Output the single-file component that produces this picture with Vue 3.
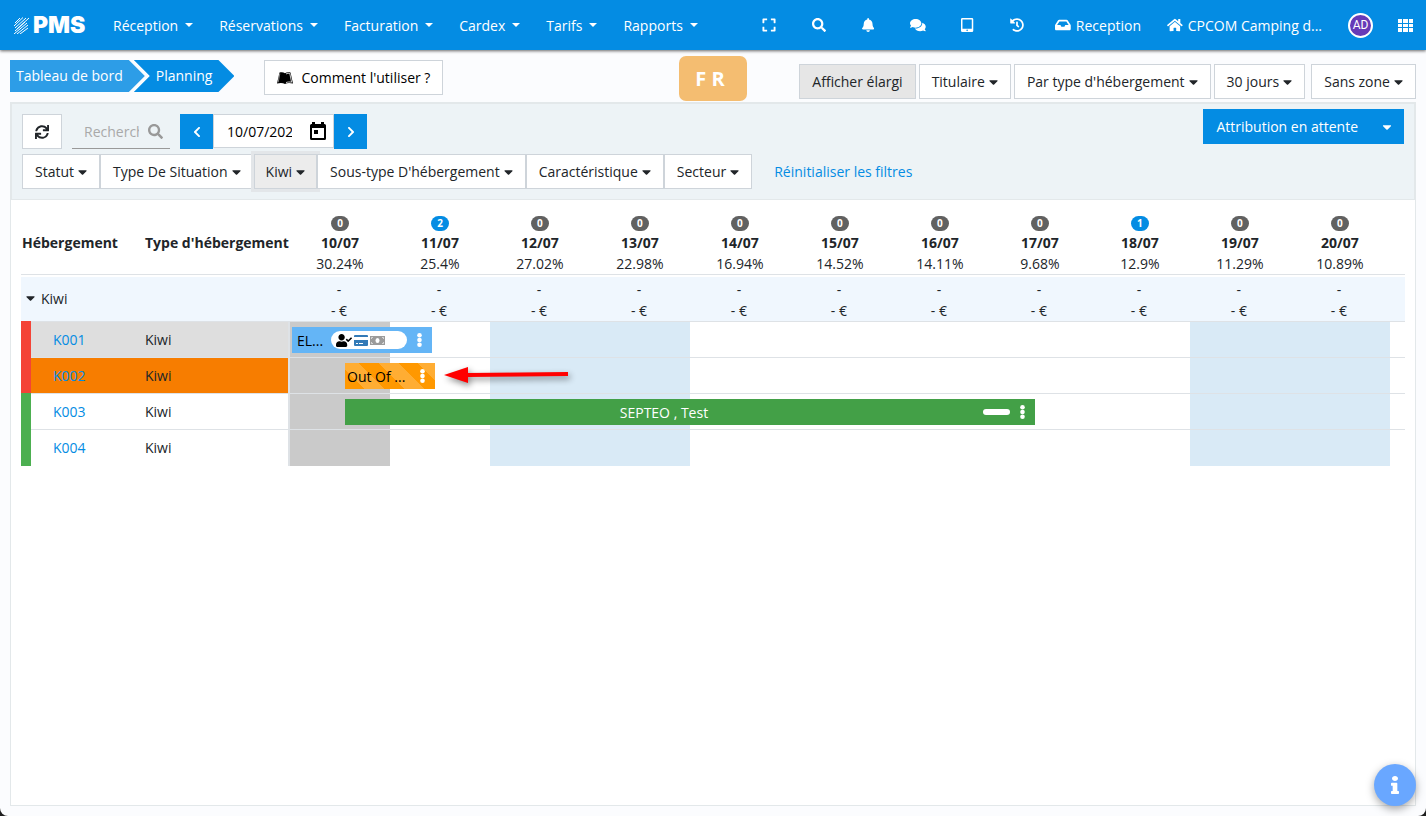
<template>
  <div class="page">
    <header class="navbar">
      <a href="#" class="logo" aria-label="PMS">
        <svg width="15" height="17" viewBox="0 0 15 17">
          <path d="M1 6L6 1M0 9L9 0.500M1 11L12 1M3 12L15 1M1 14L11 5M0 17L13 6M3 17L14 8M6 17L14 11" stroke="#fff" stroke-width="1" fill="none" />
        </svg>
        <span>PMS</span>
      </a>
      <nav class="menu">
        <button v-for="item in menu" :key="item" class="menu-item">{{ item }}<i class="tri"></i></button>
      </nav>
      <div class="nav-right">
        <div class="nav-icons">
          <button v-for="name in navIcons" :key="name" class="nav-icon" :aria-label="name">
            <svg height="14" :viewBox="icons[name].box"><path :d="icons[name].d" fill="currentColor" fill-rule="evenodd" /></svg>
          </button>
        </div>
        <a href="#" class="nav-link">
          <svg height="14" :viewBox="icons.inbox.box"><path :d="icons.inbox.d" fill="currentColor" fill-rule="evenodd" /></svg>
          Reception
        </a>
        <a href="#" class="nav-link">
          <svg height="14" :viewBox="icons.home.box"><path :d="icons.home.d" fill="currentColor" /></svg>
          CPCOM Camping d...
        </a>
        <button class="avatar">AD</button>
        <button class="apps" aria-label="Applications">
          <svg width="15" height="13" viewBox="0 0 15 13">
            <path d="M0 0h4v4H0zM5 0h5v4H5zM11 0h4v4h-4zM0 5h4v3H0zM5 5h5v3H5zM11 5h4v3h-4zM0 9h4v4H0zM5 9h5v4H5zM11 9h4v4h-4z" fill="#fff" />
          </svg>
        </button>
      </div>
    </header>

    <div class="subbar">
      <nav class="breadcrumb">
        <a href="#" class="crumb crumb-first">Tableau de bord</a>
        <a href="#" class="crumb crumb-last">Planning</a>
      </nav>
      <button class="btn help">
        <svg width="16" height="12" viewBox="0 0 16 12">
          <path d="M2.500 0.500C4.500 0 6.500 0 8 1.200C9.500 0 11.500 0 13.500 0.500L16 11.500C13 10.700 10 10.700 8 12C6 10.700 3 10.700 0 11.500z" fill="#000" />
          <path d="M9 2C10.300 1.200 11.700 1.200 12.800 1.500L14.600 10.200C12.600 9.800 10.700 9.900 9 10.600" fill="none" stroke="#fff" stroke-width="0.800" />
          <path d="M2.800 1.600L1.200 10.300" stroke="#fff" stroke-width="0.500" />
        </svg>
        Comment l'utiliser ?
      </button>
      <div class="lang">F R</div>
      <div class="view-buttons">
        <button class="btn pressed">Afficher élargi</button>
        <button v-for="label in views" :key="label" class="btn">
          {{ label }}
          <svg class="caret" width="9" height="14" :viewBox="icons.caret.box"><path :d="icons.caret.d" fill="currentColor" /></svg>
        </button>
      </div>
    </div>

    <main class="panel">
      <section class="filters">
        <div class="tools">
          <button class="btn refresh" aria-label="Actualiser">
            <svg width="14" height="14" :viewBox="icons.sync.box"><path :d="icons.sync.d" fill="currentColor" /></svg>
          </button>
          <div class="search">
            <input v-model="search" type="text" placeholder="Rechercher" aria-label="Rechercher" />
            <svg width="15" height="15" :viewBox="icons.search.box"><path :d="icons.search.d" fill="currentColor" /></svg>
          </div>
          <div class="date">
            <button class="step" aria-label="Jour précédent">
              <svg width="8" height="12" :viewBox="icons.left.box"><path :d="icons.left.d" fill="#fff" /></svg>
            </button>
            <div class="date-field">
              <input v-model="date" type="text" aria-label="Date" />
              <svg width="16" height="18" viewBox="0 0 16 18">
                <path d="M2 2V0h3v2h6V0h3v2h0.500A1.500 1.500 0 0 1 16 3.500v13A1.500 1.500 0 0 1 14.500 18h-13A1.500 1.500 0 0 1 0 16.500v-13A1.500 1.500 0 0 1 1.500 2zM2 6v10h12V6zM4 8h4v4H4z" fill="#000" fill-rule="evenodd" />
              </svg>
            </div>
            <button class="step" aria-label="Jour suivant">
              <svg width="8" height="12" :viewBox="icons.right.box"><path :d="icons.right.d" fill="#fff" /></svg>
            </button>
          </div>
          <button class="pending">Attribution en attente
            <svg class="caret" width="10" height="14" :viewBox="icons.caret.box"><path :d="icons.caret.d" fill="currentColor" /></svg>
          </button>
        </div>
        <div class="filter-row">
          <button v-for="f in filters" :key="f" class="btn" :class="{ active: f === 'Kiwi' }">
            {{ f }}
            <svg class="caret" width="9" height="14" :viewBox="icons.caret.box"><path :d="icons.caret.d" fill="currentColor" /></svg>
          </button>
          <a href="#" class="reset">Réinitialiser les filtres</a>
        </div>
      </section>

      <table class="planning">
        <colgroup>
          <col class="c-strip" />
          <col class="c-name" />
          <col class="c-type" />
          <col v-for="d in days" :key="d.date" />
          <col class="c-end" />
        </colgroup>
        <thead>
          <tr>
            <th colspan="2" class="head-name">Hébergement</th>
            <th class="head-type">Type d'hébergement</th>
            <th v-for="d in days" :key="d.date" class="head-day">
              <span class="count" :class="{ some: d.count > 0 }">{{ d.count }}</span>
              <div>{{ d.date }}</div>
              <div class="rate">{{ d.rate }}%</div>
            </th>
            <th></th>
          </tr>
        </thead>
        <tbody>
          <tr class="group">
            <td colspan="3" class="group-name">
              <button class="toggle">
                <svg width="9" height="14" :viewBox="icons.caret.box"><path :d="icons.caret.d" fill="currentColor" /></svg>
                Kiwi
              </button>
            </td>
            <td v-for="d in days" :key="d.date" class="sum"><div>-</div><div>- €</div></td>
            <td></td>
          </tr>
          <tr v-for="room in rooms" :key="room.name" class="room" :class="room.tint">
            <td class="strip" :class="room.state"></td>
            <td class="name"><a href="#">{{ room.name }}</a></td>
            <td class="type">Kiwi</td>
            <td v-for="(d, i) in days" :key="d.date" class="day" :class="{ today: i === 0, weekend: d.weekend }">
              <template v-if="i === 0 && room.bar">
                <div class="bar" :class="room.bar.kind" :style="{ left: room.bar.left + '%', width: room.bar.width + '%' }">
                  <span class="bar-text">{{ room.bar.text }}</span>
                  <span v-if="room.bar.kind === 'stay'" class="pill">
                    <svg width="16" height="13" :viewBox="icons.userCheck.box"><path :d="icons.userCheck.d" fill="#000" /></svg>
                    <svg width="14" height="11" viewBox="0 0 14 11">
                      <path d="M1 0h12a1 1 0 0 1 1 1v1H0V1a1 1 0 0 1 1-1zM0 5h14v5a1 1 0 0 1-1 1H1a1 1 0 0 1-1-1z" fill="#337ab7" />
                      <path d="M2 8.500h2M5 8.500h4" stroke="#fff" />
                    </svg>
                    <svg width="15" height="9" viewBox="0 0 15 9">
                      <path d="M0 0h15v9H0z" fill="#9b9b9b" />
                      <ellipse cx="7.500" cy="4.500" rx="2" ry="2.500" fill="#fff" />
                      <path d="M1.500 3V1.500H3M12 1.500h1.500V3M13.500 6v1.500H12M3 7.500H1.500V6" stroke="#fff" stroke-width="0.600" fill="none" />
                    </svg>
                  </span>
                  <span v-if="room.bar.kind === 'booking'" class="dash"></span>
                  <button class="dots" aria-label="Options">
                    <svg width="5" height="14" viewBox="0 0 5 14">
                      <circle cx="2.500" cy="2.300" r="2.300" fill="#fff" />
                      <circle cx="2.500" cy="7" r="2.300" fill="#fff" />
                      <circle cx="2.500" cy="11.700" r="2.300" fill="#fff" />
                    </svg>
                  </button>
                </div>
                <svg v-if="room.bar.kind === 'blocked'" class="arrow" width="126" height="18" viewBox="0 0 126 18">
                  <path d="M0 9L24 1V7L124 6V10L24 11V17z" fill="#f00" />
                </svg>
              </template>
            </td>
            <td class="end"></td>
          </tr>
        </tbody>
      </table>
    </main>

    <button class="info" aria-label="Informations">
      <svg width="8" height="18" :viewBox="icons.info.box" preserveAspectRatio="none"><path :d="icons.info.d" fill="#fff" /></svg>
    </button>
  </div>
</template>

<script setup>
import { ref } from 'vue'

const search = ref('')
const date = ref('10/07/2025')

const menu = ['Réception', 'Réservations', 'Facturation', 'Cardex', 'Tarifs', 'Rapports']
const navIcons = ['expand', 'search', 'bell', 'comments', 'tablet', 'history']
const views = ['Titulaire', "Par type d'hébergement", '30 jours', 'Sans zone']
const filters = ['Statut', 'Type De Situation', 'Kiwi', "Sous-type D'hébergement", 'Caractéristique', 'Secteur']

const days = [
  { date: '10/07', count: 0, rate: '30.24' },
  { date: '11/07', count: 2, rate: '25.4' },
  { date: '12/07', count: 0, rate: '27.02', weekend: true },
  { date: '13/07', count: 0, rate: '22.98', weekend: true },
  { date: '14/07', count: 0, rate: '16.94' },
  { date: '15/07', count: 0, rate: '14.52' },
  { date: '16/07', count: 0, rate: '14.11' },
  { date: '17/07', count: 0, rate: '9.68' },
  { date: '18/07', count: 1, rate: '12.9' },
  { date: '19/07', count: 0, rate: '11.29', weekend: true },
  { date: '20/07', count: 0, rate: '10.89', weekend: true }
]

// left and width are in percent of one day
const rooms = [
  { name: 'K001', state: 'dirty', tint: 'grey', bar: { kind: 'stay', text: 'EL...', left: 2, width: 140 } },
  { name: 'K002', state: 'dirty', tint: 'orange', bar: { kind: 'blocked', text: 'Out Of ...', left: 55, width: 90 } },
  { name: 'K003', state: 'clean', bar: { kind: 'booking', text: 'SEPTEO , Test', left: 55, width: 690 } },
  { name: 'K004', state: 'clean' }
]

const icons = {
  expand: { box: '-16 16 480 480', d: 'M0 180V56c0-13.3 10.7-24 24-24h124c6.600 0 12 5.400 12 12v40c0 6.600-5.400 12-12 12H64v84c0 6.600-5.400 12-12 12H12c-6.600 0-12-5.400-12-12zM288 44v40c0 6.600 5.400 12 12 12h84v84c0 6.600 5.400 12 12 12h40c6.600 0 12-5.400 12-12V56c0-13.3-10.7-24-24-24H300c-6.600 0-12 5.400-12 12zm148 276h-40c-6.600 0-12 5.400-12 12v84h-84c-6.600 0-12 5.400-12 12v40c0 6.600 5.400 12 12 12h124c13.3 0 24-10.7 24-24V332c0-6.600-5.400-12-12-12zM160 468v-40c0-6.600-5.400-12-12-12H64v-84c0-6.600-5.400-12-12-12H12c-6.600 0-12 5.400-12 12v124c0 13.3 10.7 24 24 24h124c6.600 0 12-5.400 12-12z' },
  search: { box: '0 0 512 512', d: 'M505 442.7L405.3 343c-4.500-4.500-10.6-7-17-7H372c27.6-35.3 44-79.7 44-128C416 93.1 322.9 0 208 0S0 93.1 0 208s93.1 208 208 208c48.3 0 92.7-16.4 128-44v16.3c0 6.400 2.500 12.5 7 17l99.7 99.7c9.400 9.400 24.6 9.400 33.9 0l28.3-28.3c9.400-9.400 9.400-24.6.1-34zM208 336c-70.7 0-128-57.2-128-128 0-70.7 57.2-128 128-128 70.7 0 128 57.2 128 128 0 70.7-57.2 128-128 128z' },
  bell: { box: '0 0 448 512', d: 'M224 512c35.32 0 63.97-28.65 63.97-64H160.03c0 35.35 28.65 64 63.97 64zm215.39-149.71c-19.32-20.76-55.47-51.99-55.47-154.29 0-77.7-54.48-139.9-127.94-155.16V32c0-17.67-14.32-32-31.98-32s-31.98 14.33-31.98 32v20.84C118.56 68.1 64.08 130.3 64.08 208c0 102.3-36.15 133.53-55.47 154.29-6 6.45-8.66 14.16-8.61 21.71.11 16.4 12.98 32 32.1 32h383.8c19.12 0 32-15.6 32.1-32 .05-7.55-2.61-15.27-8.61-21.71z' },
  comments: { box: '0 0 576 512', d: 'M416 192c0-88.4-93.1-160-208-160S0 103.6 0 192c0 34.3 14.1 65.9 38 92-13.4 30.2-35.5 54.2-35.8 54.5-2.200 2.300-2.800 5.700-1.500 8.700S4.800 352 8 352c36.6 0 66.9-12.3 88.7-25 32.2 15.7 70.3 25 111.3 25 114.9 0 208-71.6 208-160zm122 220c23.9-26 38-57.7 38-92 0-66.9-53.5-124.2-129.3-148.1.9 6.600 1.300 13.3 1.300 20.1 0 105.9-107.7 192-240 192-10.8 0-21.3-.8-31.7-1.900C207.8 439.6 281.8 480 368 480c41 0 79.1-9.200 111.3-25 21.8 12.7 52.1 25 88.7 25 3.200 0 6.100-1.900 7.300-4.800 1.300-2.900.7-6.300-1.500-8.700-.3-.3-22.4-24.2-35.8-54.5z' },
  tablet: { box: '0 0 448 512', d: 'M48 0h352a48 48 0 0 1 48 48v416a48 48 0 0 1-48 48H48a48 48 0 0 1-48-48V48A48 48 0 0 1 48 0zM54 54v340h340V54zM224 424a28 28 0 1 0 0 56 28 28 0 1 0 0-56z' },
  history: { box: '0 0 512 512', d: 'M504 255.531c.253 136.64-111.18 248.372-247.82 248.468-59.015.042-113.223-20.53-155.822-54.911-11.077-8.94-11.905-25.541-1.839-35.607l11.267-11.267c8.609-8.609 22.353-9.551 31.891-1.984C173.062 425.135 212.781 440 256 440c101.705 0 184-82.311 184-184 0-101.705-82.311-184-184-184-48.814 0-93.149 18.969-126.068 49.932l50.754 50.754c10.08 10.08 2.941 27.314-11.313 27.314H24c-8.837 0-16-7.163-16-16V38.627c0-14.254 17.234-21.393 27.314-11.314l49.372 49.372C129.209 34.136 189.552 8 256 8c136.81 0 247.747 110.78 248 247.531zm-180.912 78.784l9.823-12.63c8.138-10.463 6.253-25.542-4.210-33.679L288 256.349V152c0-13.255-10.745-24-24-24h-16c-13.255 0-24 10.745-24 24v135.651l65.409 50.874c10.463 8.137 25.541 6.253 33.679-4.210z' },
  inbox: { box: '0 0 576 512', d: 'M567.938 243.908L462.25 85.374A48.003 48.003 0 0 0 422.311 64H153.689a48 48 0 0 0-39.938 21.374L8.062 243.908A47.994 47.994 0 0 0 0 270.533V400c0 26.51 21.49 48 48 48h480c26.51 0 48-21.49 48-48V270.533a47.994 47.994 0 0 0-8.062-26.625zM162.252 128h251.497l85.333 128H376l-32 64H232l-32-64H76.918l85.334-128z' },
  home: { box: '0 0 576 512', d: 'M280.37 148.26L96 300.11V464a16 16 0 0 0 16 16l112.06-.29a16 16 0 0 0 15.92-16V368a16 16 0 0 1 16-16h64a16 16 0 0 1 16 16v95.64a16 16 0 0 0 16 16.05L464 480a16 16 0 0 0 16-16V300L295.67 148.26a12.19 12.19 0 0 0-15.3 0zM571.6 251.47L488 182.56V44.05a12 12 0 0 0-12-12h-56a12 12 0 0 0-12 12v72.61L318.47 43a48 48 0 0 0-61 0L4.34 251.47a12 12 0 0 0-1.600 16.9l25.5 31A12 12 0 0 0 45.15 301l235.22-193.74a12.19 12.19 0 0 1 15.3 0L530.9 301a12 12 0 0 0 16.9-1.600l25.5-31a12 12 0 0 0-1.700-16.93z' },
  left: { box: '0 0 320 512', d: 'M34.52 239.03L228.87 44.69c9.370-9.370 24.57-9.370 33.94 0l22.67 22.67c9.360 9.360 9.370 24.52.04 33.9L131.49 256l154.02 154.75c9.340 9.380 9.320 24.54-.04 33.9l-22.67 22.67c-9.370 9.370-24.57 9.370-33.94 0L34.52 272.97c-9.370-9.370-9.370-24.57 0-33.94z' },
  right: { box: '0 0 320 512', d: 'M285.476 272.971L91.132 467.314c-9.373 9.373-24.569 9.373-33.941 0l-22.667-22.667c-9.357-9.357-9.375-24.522-.04-33.901L188.505 256 34.484 101.255c-9.335-9.379-9.317-24.544.04-33.901l22.667-22.667c9.373-9.373 24.569-9.373 33.941 0L285.475 239.03c9.373 9.372 9.373 24.568.001 33.941z' },
  sync: { box: '0 0 512 512', d: 'M440.65 12.57l4 82.77A247.16 247.16 0 0 0 255.83 8C134.73 8 33.91 94.92 12.29 209.82A12 12 0 0 0 24.09 224h49.05a12 12 0 0 0 11.67-9.260 175.91 175.91 0 0 1 317-56.94l-101.46-4.860a12 12 0 0 0-12.57 12v47.41a12 12 0 0 0 12 12H500a12 12 0 0 0 12-12V12a12 12 0 0 0-12-12h-47.37a12 12 0 0 0-11.98 12.57zM255.83 432a175.61 175.61 0 0 1-146-77.8l101.8 4.870a12 12 0 0 0 12.57-12v-47.4a12 12 0 0 0-12-12H12a12 12 0 0 0-12 12V500a12 12 0 0 0 12 12h47.35a12 12 0 0 0 12-12.6l-4.150-82.57A247.17 247.17 0 0 0 255.83 504c121.11 0 221.93-86.92 243.55-201.82a12 12 0 0 0-11.8-14.18h-49.05a12 12 0 0 0-11.67 9.260A175.86 175.86 0 0 1 255.83 432z' },
  caret: { box: '0 0 320 512', d: 'M31.3 192h257.3c17.8 0 26.7 21.5 14.1 34.1L174.1 354.8c-7.800 7.800-20.5 7.800-28.3 0L17.2 226.1C4.600 213.5 13.5 192 31.3 192z' },
  userCheck: { box: '0 0 640 512', d: 'M224 256c70.7 0 128-57.3 128-128S294.7 0 224 0 96 57.3 96 128s57.3 128 128 128zm89.6 32h-16.7c-22.2 10.2-46.9 16-72.9 16s-50.6-5.800-72.9-16h-16.7C60.2 288 0 348.2 0 422.4V464c0 26.5 21.5 48 48 48h352c26.5 0 48-21.5 48-48v-41.6c0-74.2-60.2-134.4-134.4-134.4zm323-128.4l-27.8-28.1c-4.600-4.700-12.1-4.700-16.8-.1l-104.8 104-45.5-45.8c-4.600-4.700-12.1-4.700-16.8-.1l-28.1 27.9c-4.700 4.600-4.700 12.1-.1 16.8l81.7 82.3c4.600 4.700 12.1 4.700 16.8.1l141.3-140.2c4.600-4.700 4.700-12.2.1-16.8z' },
  info: { box: '0 0 192 512', d: 'M20 424.229h20V279.771H20c-11.046 0-20-8.954-20-20V212c0-11.046 8.954-20 20-20h112c11.046 0 20 8.954 20 20v212.229h20c11.046 0 20 8.954 20 20V492c0 11.046-8.954 20-20 20H20c-11.046 0-20-8.954-20-20v-47.771c0-11.046 8.954-20 20-20zM96 0C56.235 0 24 32.235 24 72s32.235 72 72 72 72-32.235 72-72S135.764 0 96 0z' }
}
</script>

<style>
html {
  background: #1f1f1f;
}
</style>

<style scoped>
.page {
  display: flex;
  flex-direction: column;
  min-height: 100vh;
  background: #fbfcfe;
  border-radius: 0 0 8px 8px;
  font-family: "Open Sans", sans-serif;
  font-size: 14px;
  line-height: 21px;
  color: #212529;
}

.page * {
  box-sizing: border-box;
}

button,
input {
  font: inherit;
  color: inherit;
  margin: 0;
}

button {
  cursor: pointer;
  white-space: nowrap;
}

a {
  color: #048ce3;
  text-decoration: none;
}

svg {
  flex: none;
}

/* Top bar */
.navbar {
  display: flex;
  align-items: center;
  height: 50px;
  padding: 0 13px 0 14px;
  background: #048ce3;
  color: #fff;
  box-shadow: 0 1px 3px rgba(0, 0, 0, 0.6);
  position: relative;
}

.logo {
  display: flex;
  align-items: center;
  gap: 4px;
  width: 86px;
  color: #fff;
  font-family: Inter, sans-serif;
  font-size: 23px;
  font-weight: 900;
}

.menu,
.nav-right,
.nav-icons {
  display: flex;
  align-items: center;
}

.menu-item {
  display: flex;
  align-items: center;
  gap: 7px;
  padding: 0 13px;
  border: 0;
  background: none;
}

.tri {
  border: 4px solid transparent;
  border-top-color: #fff;
  border-bottom: 0;
}

.nav-right {
  margin-left: auto;
}

.nav-icons {
  width: 298px;
}

.nav-icon {
  flex: 1;
  display: flex;
  justify-content: center;
  padding: 0;
  border: 0;
  background: none;
}

.nav-link {
  display: flex;
  align-items: center;
  gap: 5px;
  padding: 0 13px;
  color: #fff;
  white-space: nowrap;
}

.avatar {
  width: 25px;
  height: 25px;
  margin: 0 25px 0 13px;
  padding: 0;
  border: 2px solid #fff;
  border-radius: 50%;
  background: #673ab7;
  font-family: Roboto, sans-serif;
  font-size: 12px;
  line-height: 20px;
}

.apps {
  display: flex;
  padding: 0;
  border: 0;
  background: none;
}

/* Breadcrumb line */
.subbar {
  display: flex;
  align-items: flex-start;
  height: 52px;
  padding: 10px 10px 0;
  position: relative;
}

.breadcrumb {
  display: flex;
}

.crumb {
  height: 32px;
  line-height: 32px;
  color: #fff;
  padding-right: 22px;
  white-space: nowrap;
}

.crumb-first {
  padding-left: 6px;
  background: #2d9de7;
  clip-path: polygon(0 0, calc(100% - 16px) 0, 100% 50%, calc(100% - 16px) 100%, 0 100%);
}

.crumb-last {
  margin-left: -11px;
  padding-left: 22px;
  background: #048ce3;
  clip-path: polygon(0 0, calc(100% - 16px) 0, 100% 50%, calc(100% - 16px) 100%, 0 100%, 16px 50%);
}

.btn {
  display: flex;
  align-items: center;
  gap: 4px;
  height: 35px;
  padding: 0 12px;
  border: 1px solid #ced4da;
  background: #fff;
}

.help {
  gap: 8px;
  margin-left: 30px;
  color: #000;
}

.lang {
  position: absolute;
  top: 6px;
  left: calc(50% - 34px);
  width: 68px;
  height: 45px;
  padding-right: 6px;
  border-radius: 7px;
  background: #f4bd71;
  color: #fff;
  font-size: 20px;
  font-weight: 700;
  line-height: 45px;
  text-align: center;
}

.view-buttons {
  display: flex;
  gap: 3px;
  margin-top: 4px;
  margin-left: auto;
}

.view-buttons .btn:last-child {
  margin-left: 3px;
}

.pressed {
  background: #e6e6e6;
}

/* Panel */
.panel {
  flex: 1;
  margin: 0 10px 10px;
  border: 1px solid #e3e8ea;
  background: #fff;
}

.filters {
  padding: 10px;
  border: 1px solid #e3e8ea;
  background: #edf3f6;
}

.tools {
  display: flex;
  align-items: flex-start;
}

.refresh {
  width: 40px;
  justify-content: center;
}

.search {
  display: flex;
  align-items: center;
  gap: 9px;
  width: 98px;
  height: 35px;
  margin: 0 10px;
  padding-left: 12px;
  border-bottom: 1px solid #999;
  color: #999;
}

.search input {
  width: 55px;
  padding: 0;
  border: 0;
  outline: 0;
  background: none;
}

.search input::placeholder {
  color: #a9a9a9;
}

.date {
  display: flex;
}

.step {
  display: flex;
  align-items: center;
  justify-content: center;
  width: 33px;
  height: 35px;
  padding: 0;
  border: 0;
  background: #048ce3;
}

.date-field {
  display: flex;
  align-items: center;
  justify-content: space-between;
  width: 121px;
  height: 34px;
  padding: 0 7px 0 13px;
  border: 1px solid #ced4da;
  background: #fff;
  color: #000;
}

.date-field input {
  width: 65px;
  padding: 0;
  border: 0;
  outline: 0;
  background: none;
}

.pending {
  display: flex;
  align-items: center;
  gap: 24px;
  height: 35px;
  margin-top: -5px;
  margin-left: auto;
  padding: 0 12px 0 13px;
  border: 0;
  background: #048ce3;
  color: #fff;
}

.filter-row {
  display: flex;
  align-items: center;
  margin-top: 5px;
}

.active {
  padding: 0 11px;
  background: #ececec;
  box-shadow: 0 0 0 3px #e3e6e9;
}

.reset {
  margin-left: 22px;
}

/* Planning table */
.planning {
  width: calc(100% - 20px);
  margin: 0 10px;
  table-layout: fixed;
  border-collapse: separate;
  border-spacing: 0;
}

.c-strip {
  width: 10px;
}

.c-name {
  width: 114px;
}

.c-type {
  width: 145px;
}

.c-end {
  width: 15px;
}

th {
  height: 75px;
  padding: 11px 0 0;
  border-bottom: 1px solid #dee2e6;
  text-align: left;
  white-space: nowrap;
}

.head-name {
  padding-left: 1px;
}

.head-day {
  padding-top: 16px;
  text-align: center;
  vertical-align: top;
}

.count {
  display: block;
  width: 18px;
  height: 15px;
  margin: 0 auto 1px;
  border-radius: 8px;
  background: #616161;
  color: #fff;
  font-size: 10px;
  line-height: 15px;
}

.count.some {
  background: #048ce3;
}

.rate {
  font-weight: 400;
}

td {
  padding: 0;
}

.group td {
  height: 46px;
  border-top: 2px solid #fff;
  background: #f0f7fe;
}

.group .group-name {
  padding-bottom: 2px;
}

.toggle {
  display: flex;
  align-items: center;
  gap: 6px;
  padding: 0 5px;
  border: 0;
  background: none;
}

.group .sum {
  padding-top: 1px;
  padding-right: 2px;
  text-align: center;
}

.room td {
  height: 36px;
  border-top: 1px solid #dee2e6;
}

.room:last-child td {
  height: 37px;
  padding-bottom: 1px;
}

.room .strip {
  border: 0;
}

.dirty {
  background: #f44336;
}

.clean {
  background: #4caf50;
}

.name {
  padding-left: 22px;
}

.room .type {
  border-right: 2px solid #dee2e6;
}

.grey .name,
.grey .type {
  background: #dedede;
}

.orange .name,
.orange .type {
  background: #f77d00;
}

.day {
  position: relative;
}

.today {
  background: #cacaca;
}

.weekend {
  background: #d9eaf6;
}

.bar {
  position: absolute;
  z-index: 1;
  top: 5px;
  display: flex;
  align-items: center;
  height: 26px;
  color: #000;
  white-space: nowrap;
}

.bar-text {
  flex: 1;
}

.stay {
  padding-left: 5px;
  background: #64b5f6;
}

.blocked {
  padding-left: 2px;
  background: repeating-linear-gradient(45deg, #ff9800 0, #ff9800 14px, #ffad33 14px, #ffad33 28px);
}

.booking {
  background: #43a047;
  color: #fff;
}

.booking .bar-text {
  text-align: center;
}

.pill {
  display: flex;
  align-items: center;
  gap: 2px;
  width: 76px;
  height: 18px;
  padding-left: 5px;
  border-radius: 9px;
  background: #fff;
}

.dash {
  width: 27px;
  height: 6px;
  border-radius: 3px;
  background: #fff;
}

.dots {
  display: flex;
  justify-content: center;
  width: 25px;
  padding: 0;
  border: 0;
  background: none;
}

.arrow {
  position: absolute;
  z-index: 2;
  top: 8px;
  left: 154%;
  overflow: visible;
  filter: drop-shadow(2px 3px 3px rgba(0, 0, 0, 0.45));
}

.info {
  position: fixed;
  right: 10px;
  bottom: 10px;
  display: flex;
  align-items: center;
  justify-content: center;
  width: 42px;
  height: 42px;
  padding: 0;
  border: 0;
  border-radius: 50%;
  background: #69a7ff;
  box-shadow: 0 3px 8px rgba(0, 0, 0, 0.35);
}
</style>
